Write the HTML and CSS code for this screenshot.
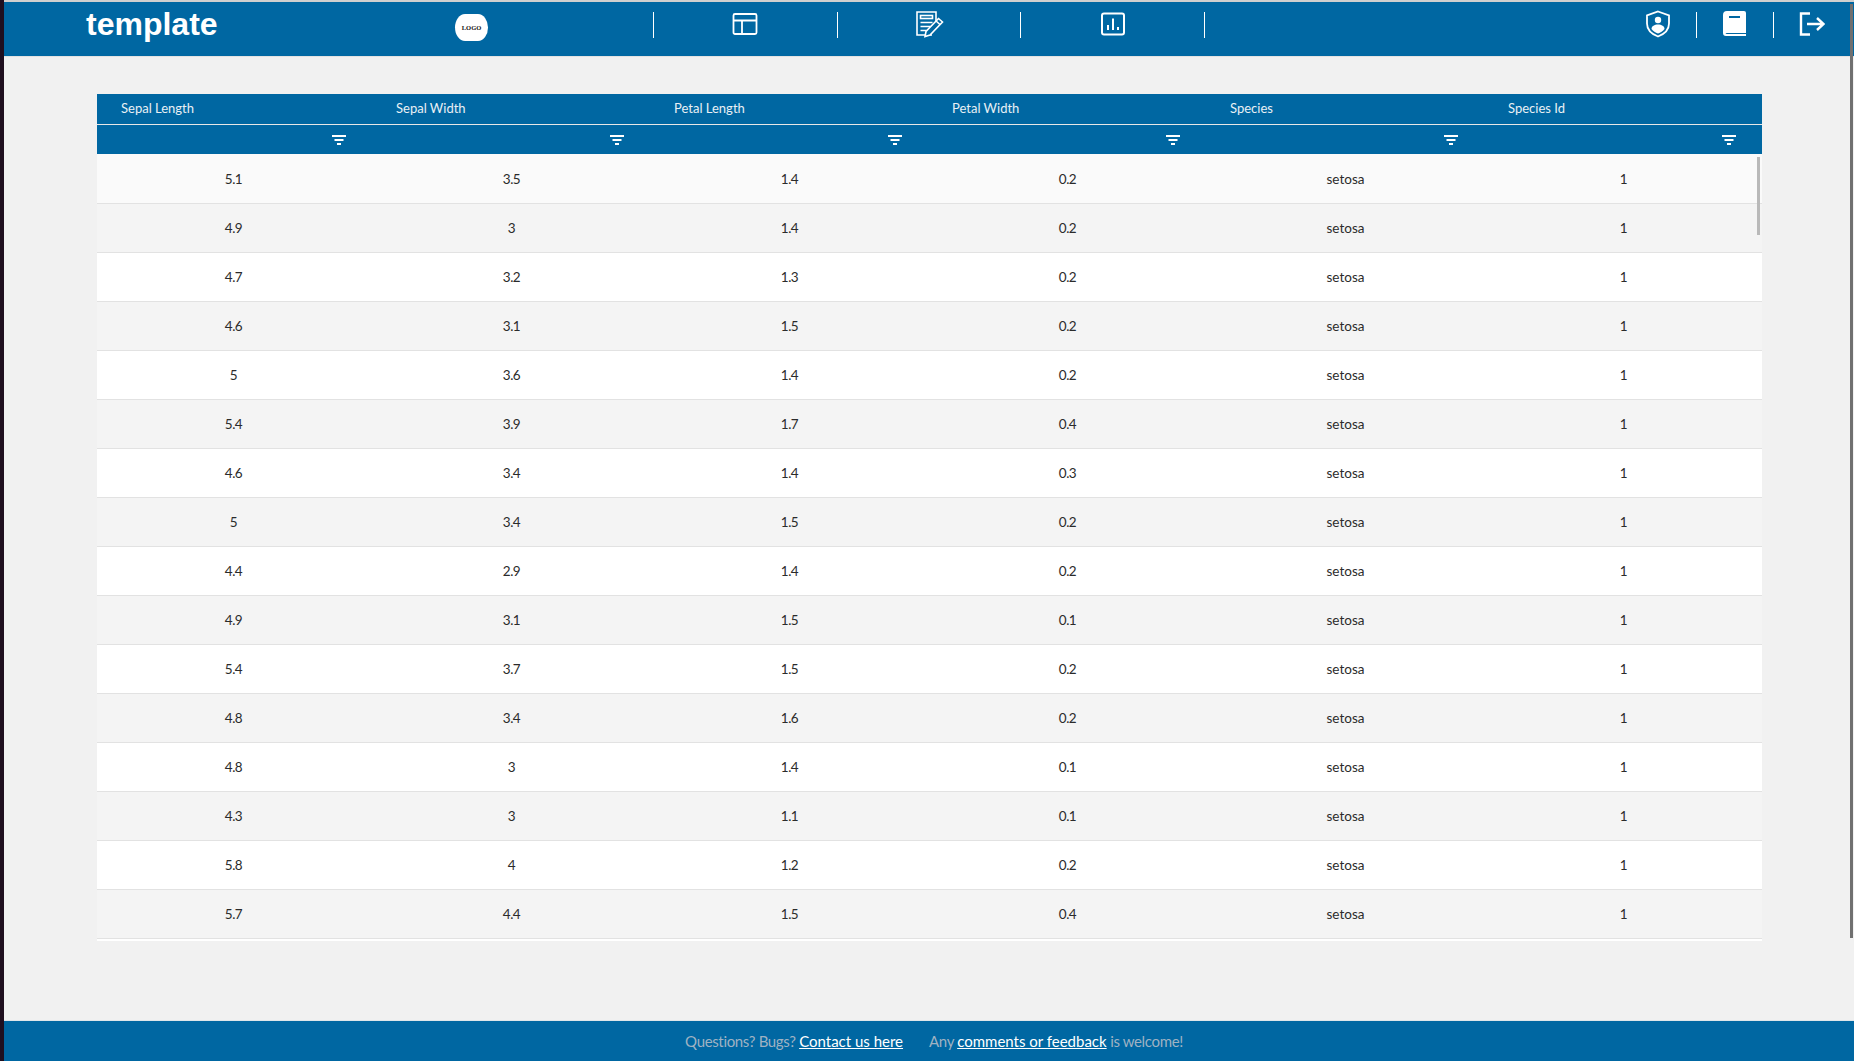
FILE: index.html
```html
<!DOCTYPE html>
<html lang="en">
<head>
    <meta charset="UTF-8">
    <title>template</title>
    <link rel="stylesheet" href="styles.css">
</head>
<body>

<div class="app">
    <header class="topbar">
        <div class="brand">template</div>
        <div class="logo"><span>LOGO</span></div>

        <nav class="nav">
            <a class="nav-item">
                <svg width="26" height="24" viewBox="0 0 26 24" fill="none" stroke="#fff" stroke-width="1.8"><rect x="1.5" y="2" width="23" height="20" rx="1.5"/><path d="M1.5 8.5h23M10 8.5V22"/></svg>
            </a>
            <a class="nav-item">
                <svg width="30" height="28" viewBox="0 0 30 28" fill="none" stroke="#fff" stroke-width="1.6"><path d="M18 25H3V2h19v12"/><rect x="6.5" y="5.500" width="12" height="3"/><path d="M6.500 12.500h12M6.500 16.500h10M6.500 20.500h6"/><path d="M11 26.500l1-5 12.500-13 4 3.500-12.500 13z" fill="#0067a2"/><path d="M22 11l4 3.500"/></svg>
            </a>
            <a class="nav-item">
                <svg width="26" height="24" viewBox="0 0 26 24" fill="none" stroke="#fff" stroke-width="2"><rect x="2" y="1.500" width="22" height="21" rx="2"/><path d="M8 18v-5M13 18V6.500M18 18v-3"/></svg>
            </a>
        </nav>

        <div class="tools">
            <a class="tool">
                <svg width="26" height="28" viewBox="0 0 26 28" fill="none" stroke="#fff" stroke-width="1.8"><path d="M13 1.500l11 4v8c0 6-4.500 10.500-11 13-6.500-2.500-11-7-11-13v-8z"/><circle cx="13" cy="10" r="3.200" fill="#fff" stroke="none"/><path d="M6.500 19c0-3 3-4.500 6.500-4.500s6.500 1.500 6.500 4.500c-1.500 2-4 3.500-6.500 4.500-2.500-1-5-2.500-6.500-4.500z" fill="#fff" stroke="none"/></svg>
            </a>
            <a class="tool">
                <svg width="24" height="26" viewBox="0 0 24 26"><path d="M4 0h17a2 2 0 0 1 2 2v20H4a2 2 0 0 0-1.500 1H23v2H3a3 3 0 0 1-3-3V4a4 4 0 0 1 4-4z" fill="#fff"/><rect x="6" y="5" width="11" height="2" fill="#0067a2"/></svg>
            </a>
            <a class="tool">
                <svg width="26" height="24" viewBox="0 0 26 24" fill="none" stroke="#fff" stroke-width="2.400"><path d="M11 1.500H2v21h9"/><path d="M8 12h16M18 6l6.500 6-6.500 6"/></svg>
            </a>
        </div>
    </header>

    <main class="content">
        <div class="table-wrap">
            <table class="data-table">
                <thead>
                    <tr class="head-row">
                        <th>Sepal Length</th>
                        <th>Sepal Width</th>
                        <th>Petal Length</th>
                        <th>Petal Width</th>
                        <th>Species</th>
                        <th>Species Id</th>
                    </tr>
                    <tr class="filter-row">
                        <th><svg class="filter" width="14" height="10" viewBox="0 0 14 10"><path d="M0 0h14v2H0zM2.500 4h9v2h-9zM5 8h4v2H5z"/></svg></th>
                        <th><svg class="filter" width="14" height="10" viewBox="0 0 14 10"><path d="M0 0h14v2H0zM2.500 4h9v2h-9zM5 8h4v2H5z"/></svg></th>
                        <th><svg class="filter" width="14" height="10" viewBox="0 0 14 10"><path d="M0 0h14v2H0zM2.500 4h9v2h-9zM5 8h4v2H5z"/></svg></th>
                        <th><svg class="filter" width="14" height="10" viewBox="0 0 14 10"><path d="M0 0h14v2H0zM2.500 4h9v2h-9zM5 8h4v2H5z"/></svg></th>
                        <th><svg class="filter" width="14" height="10" viewBox="0 0 14 10"><path d="M0 0h14v2H0zM2.500 4h9v2h-9zM5 8h4v2H5z"/></svg></th>
                        <th><svg class="filter" width="14" height="10" viewBox="0 0 14 10"><path d="M0 0h14v2H0zM2.500 4h9v2h-9zM5 8h4v2H5z"/></svg></th>
                    </tr>
                </thead>
                <tbody>
                    <tr><td>5.1</td><td>3.5</td><td>1.4</td><td>0.2</td><td>setosa</td><td>1</td></tr>
                    <tr><td>4.9</td><td>3</td><td>1.4</td><td>0.2</td><td>setosa</td><td>1</td></tr>
                    <tr><td>4.7</td><td>3.2</td><td>1.3</td><td>0.2</td><td>setosa</td><td>1</td></tr>
                    <tr><td>4.6</td><td>3.1</td><td>1.5</td><td>0.2</td><td>setosa</td><td>1</td></tr>
                    <tr><td>5</td><td>3.6</td><td>1.4</td><td>0.2</td><td>setosa</td><td>1</td></tr>
                    <tr><td>5.4</td><td>3.9</td><td>1.7</td><td>0.4</td><td>setosa</td><td>1</td></tr>
                    <tr><td>4.6</td><td>3.4</td><td>1.4</td><td>0.3</td><td>setosa</td><td>1</td></tr>
                    <tr><td>5</td><td>3.4</td><td>1.5</td><td>0.2</td><td>setosa</td><td>1</td></tr>
                    <tr><td>4.4</td><td>2.9</td><td>1.4</td><td>0.2</td><td>setosa</td><td>1</td></tr>
                    <tr><td>4.9</td><td>3.1</td><td>1.5</td><td>0.1</td><td>setosa</td><td>1</td></tr>
                    <tr><td>5.4</td><td>3.7</td><td>1.5</td><td>0.2</td><td>setosa</td><td>1</td></tr>
                    <tr><td>4.8</td><td>3.4</td><td>1.6</td><td>0.2</td><td>setosa</td><td>1</td></tr>
                    <tr><td>4.8</td><td>3</td><td>1.4</td><td>0.1</td><td>setosa</td><td>1</td></tr>
                    <tr><td>4.3</td><td>3</td><td>1.1</td><td>0.1</td><td>setosa</td><td>1</td></tr>
                    <tr><td>5.8</td><td>4</td><td>1.2</td><td>0.2</td><td>setosa</td><td>1</td></tr>
                    <tr><td>5.7</td><td>4.4</td><td>1.5</td><td>0.4</td><td>setosa</td><td>1</td></tr>
                </tbody>
            </table>
            <div class="table-scrollbar"></div>
        </div>
    </main>

    <footer class="footer">
        <span>Questions? Bugs? <a href="#">Contact us here</a></span>
        <span>Any <a href="#">comments or feedback</a> is welcome!</span>
    </footer>
</div>

<div class="page-scrollbar"></div>

</body>
</html>
```

FILE: styles.css
```css
html, body {
    height: 100%;
    margin: 0;
    overflow: hidden;
}
body {
    font-family: 'Lato', 'Liberation Sans', sans-serif;
    background-color: #f1f1f1;
    border-left: 4px solid #1f0f1f;
    box-sizing: border-box;
    color: #2b2b2b;
}
.app {
    display: flex;
    flex-direction: column;
    height: 100%;
}

/* top bar */
.topbar {
    display: flex;
    align-items: flex-start;
    flex: 0 0 auto;
    height: 54px;
    margin-top: 2px;
    padding-left: 82px;
    background-color: #0067a2;
    box-shadow: 0 -2px 0 #cfcfcf, 0 1px 0 #e2e2e2;
}
.brand {
    width: 369px;
    margin-top: 3px;
    font-family: 'Liberation Sans', Arial, sans-serif;
    font-size: 32px;
    font-weight: bold;
    line-height: 38px;
    color: #fff;
}
.logo {
    display: flex;
    align-items: center;
    justify-content: center;
    width: 33px;
    height: 27px;
    margin-top: 12px;
    background-color: #fff;
    border-radius: 10px / 13.5px;
    font-family: 'Liberation Serif', serif;
    font-size: 6.5px;
    font-weight: bold;
    color: #111;
}
.nav {
    display: flex;
    margin-top: 10px;
    margin-left: 165px;
    border-left: 1px solid #fff;
    height: 26px;
}
.nav-item {
    display: flex;
    align-items: center;
    justify-content: center;
    width: 182.7px;
    padding-bottom: 2px;
    box-sizing: content-box;
    border-right: 1px solid #fff;
}
.tools {
    display: flex;
    margin-left: auto;
    margin-top: 10px;
    margin-right: 4px;
    height: 26px;
}
.tool {
    display: flex;
    align-items: center;
    justify-content: center;
    width: 76px;
    padding-bottom: 2px;
    border-right: 1px solid #fff;
}
.tool:last-child {
    border-right: none;
}

/* table */
.content {
    flex: 1 1 auto;
    padding: 38px 92px 0 93px;
}
.table-wrap {
    position: relative;
    height: 847px;
    overflow: hidden;
    background-color: #fff;
}
.data-table {
    width: 1668px;
    table-layout: fixed;
    border-collapse: collapse;
    font-size: 13.5px;
}
.head-row th {
    height: 30px;
    padding: 0 0 2px 21px;
    background-color: #0067a2;
    border-bottom: 1px solid #e8e8e8;
    box-sizing: border-box;
    font-size: 13px;
    font-weight: normal;
    text-align: left;
    color: #e9f0f5;
}
.head-row th:first-child {
    padding-left: 24px;
}
.filter-row th {
    height: 30px;
    padding: 0 29px 2px 0;
    box-sizing: border-box;
    background-color: #0067a2;
    text-align: right;
}
.filter {
    display: inline-block;
    vertical-align: middle;
    fill: #fff;
}
.data-table td {
    height: 49px;
    padding: 1px 5px 0 0;
    box-sizing: border-box;
    border-bottom: 1px solid #e2e2e2;
    text-align: center;
    letter-spacing: -0.5px;
}
.data-table td:nth-child(5) {
    letter-spacing: 0;
}
.data-table tbody tr:nth-child(even) td {
    background-color: #f4f4f4;
}
.data-table tbody tr:first-child td {
    background-color: #fafafa;
}
.table-scrollbar {
    position: absolute;
    top: 63px;
    right: 2px;
    width: 3px;
    height: 78px;
    background-color: #b9b9b9;
}
.page-scrollbar {
    position: absolute;
    top: 4px;
    right: 1px;
    width: 3px;
    height: 934px;
    background-color: #707070;
}

/* footer */
.footer {
    display: flex;
    flex: 0 0 auto;
    align-items: center;
    justify-content: center;
    gap: 26px;
    box-sizing: border-box;
    height: 41px;
    padding-left: 10px;
    background-color: #0067a2;
    border-top: 1px solid #dfe6ea;
    font-size: 15px;
    letter-spacing: -0.35px;
    color: #9fb2c2;
}
.footer a {
    color: #fff;
    letter-spacing: 0;
    text-decoration: underline;
}
```
